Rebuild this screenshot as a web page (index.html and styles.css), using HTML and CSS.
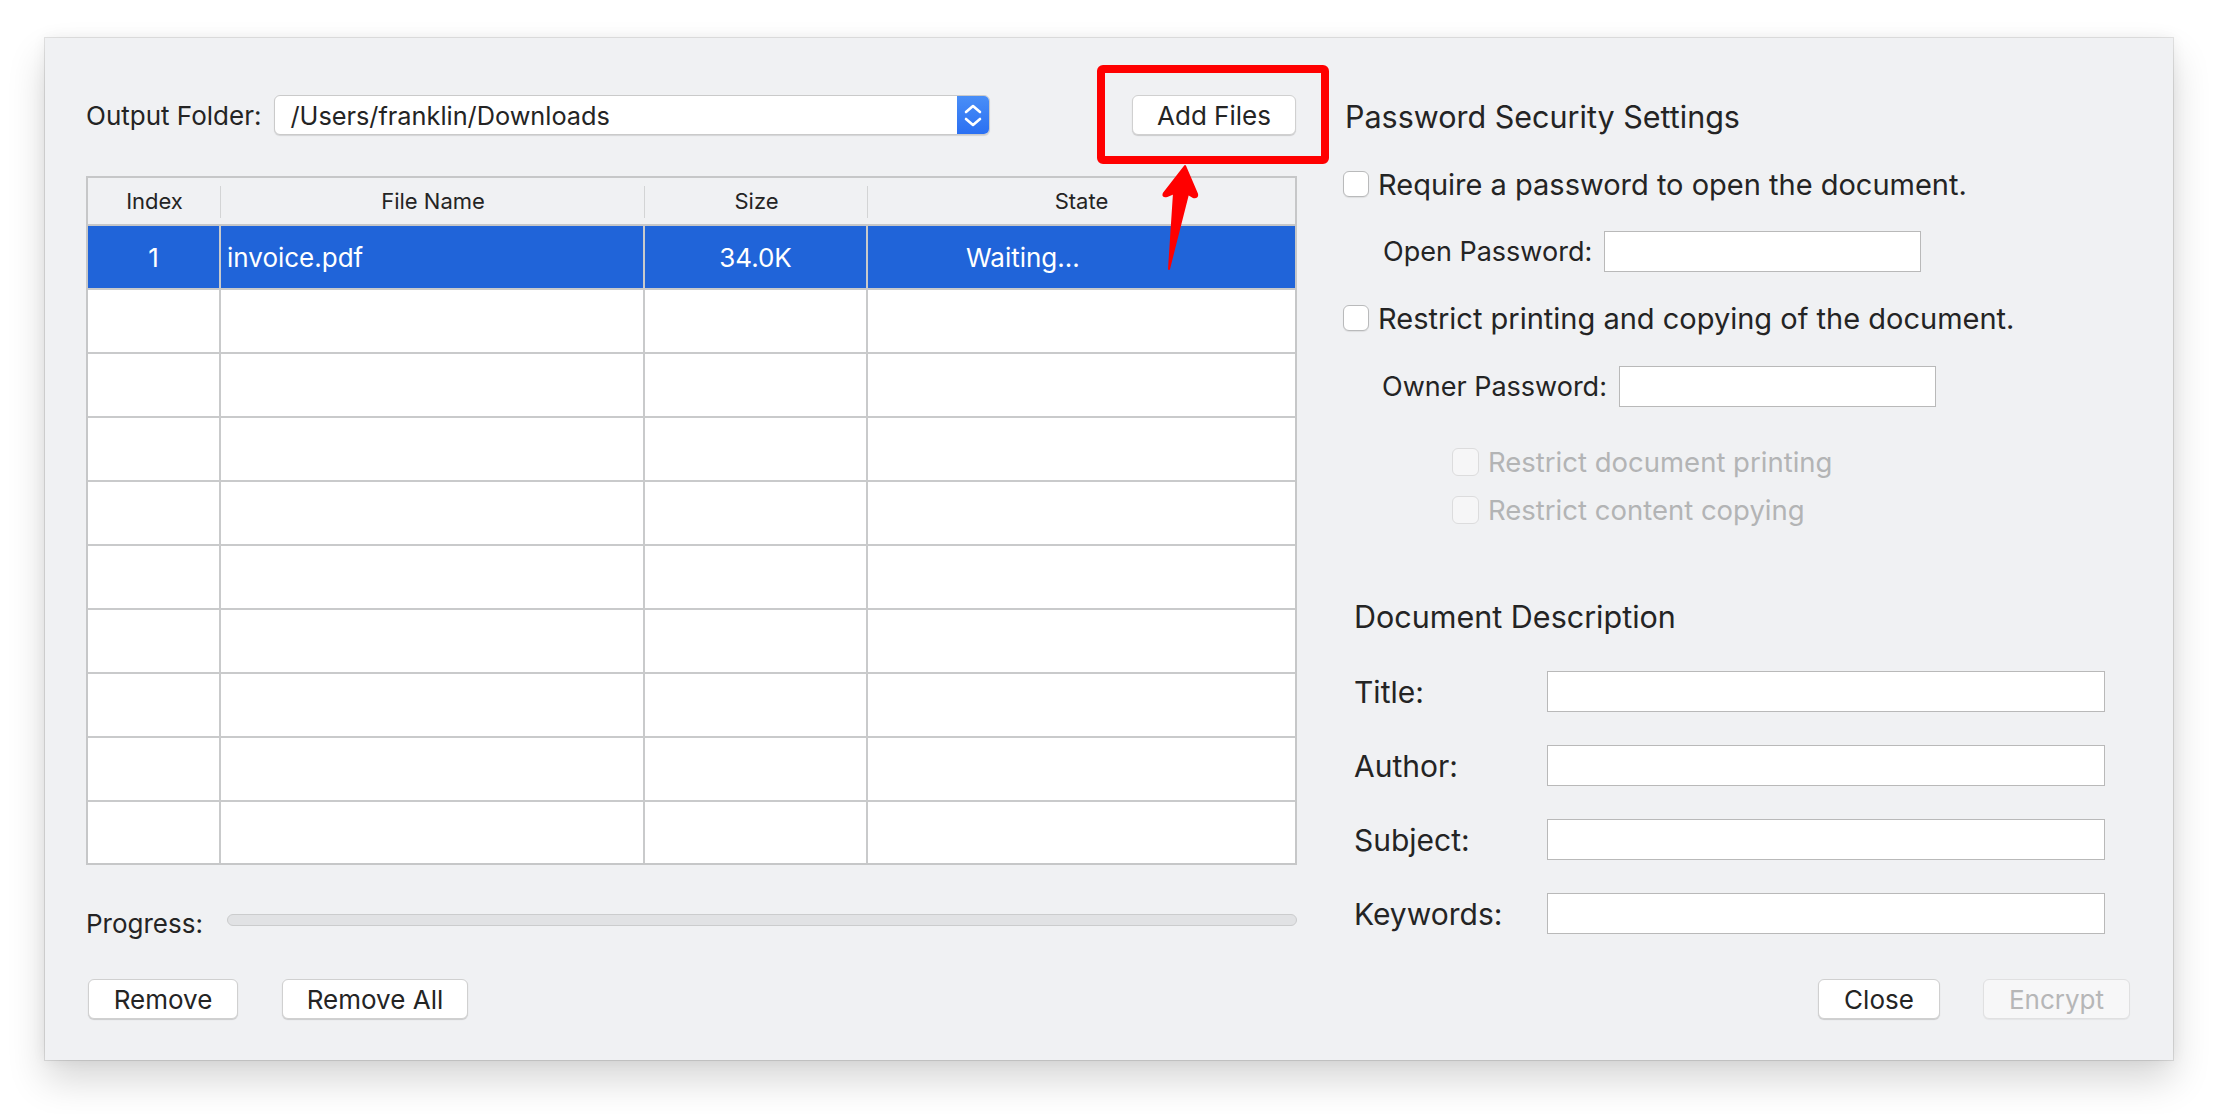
FILE: index.html
```html
<!DOCTYPE html>
<html lang="en">
<head>
  <meta charset="UTF-8" />
  <title>PDF Encrypt</title>
  <link rel="stylesheet" href="styles.css">
</head>
<body>
  <div class="window">
    <div class="left-pane">
      <div class="folder-row">
        <span class="label">Output Folder:</span>
        <div class="popup">
          <span class="popup-text">/Users/franklin/Downloads</span>
          <span class="stepper">
            <svg width="32" height="40" viewBox="0 0 32 40">
              <path d="M9 17 L16 11 L23 17" fill="none" stroke="#fff" stroke-width="2.6" stroke-linecap="round" stroke-linejoin="round"/>
              <path d="M9 24 L16 30 L23 24" fill="none" stroke="#fff" stroke-width="2.6" stroke-linecap="round" stroke-linejoin="round"/>
            </svg>
          </span>
        </div>
        <button class="btn add-btn">Add Files</button>
      </div>

      <table class="files">
        <colgroup>
          <col class="col-index">
          <col class="col-name">
          <col class="col-size">
          <col class="col-state">
        </colgroup>
        <thead>
          <tr><th>Index</th><th>File Name</th><th>Size</th><th class="last">State</th></tr>
        </thead>
        <tbody>
          <tr class="selected"><td class="center">1</td><td class="name">invoice.pdf</td><td class="center">34.0K</td><td class="state">Waiting...</td></tr>
          <tr><td></td><td></td><td></td><td></td></tr>
          <tr><td></td><td></td><td></td><td></td></tr>
          <tr><td></td><td></td><td></td><td></td></tr>
          <tr><td></td><td></td><td></td><td></td></tr>
          <tr><td></td><td></td><td></td><td></td></tr>
          <tr><td></td><td></td><td></td><td></td></tr>
          <tr><td></td><td></td><td></td><td></td></tr>
          <tr><td></td><td></td><td></td><td></td></tr>
          <tr class="last-row"><td></td><td></td><td></td><td></td></tr>
        </tbody>
      </table>

      <div class="progress-row">
        <span class="label">Progress:</span>
        <div class="progress-bar"></div>
      </div>

      <div class="button-row">
        <button class="btn remove-btn">Remove</button>
        <button class="btn remove-all-btn">Remove All</button>
      </div>
    </div>

    <div class="right-pane">
      <h2 class="section-title">Password Security Settings</h2>

      <label class="check-row first-check">
        <span class="checkbox"></span>
        <span>Require a password to open the document.</span>
      </label>
      <div class="pw-row open-pw">
        <span>Open Password:</span>
        <span class="text-field pw-field"></span>
      </div>

      <label class="check-row second-check">
        <span class="checkbox"></span>
        <span>Restrict printing and copying of the document.</span>
      </label>
      <div class="pw-row owner-pw">
        <span>Owner Password:</span>
        <span class="text-field pw-field"></span>
      </div>

      <label class="check-row sub-check print-check disabled">
        <span class="checkbox"></span>
        <span>Restrict document printing</span>
      </label>
      <label class="check-row sub-check copy-check disabled">
        <span class="checkbox"></span>
        <span>Restrict content copying</span>
      </label>

      <h2 class="section-title desc-title">Document Description</h2>

      <div class="desc-grid">
        <span class="desc-label">Title:</span><span class="text-field"></span>
        <span class="desc-label">Author:</span><span class="text-field"></span>
        <span class="desc-label">Subject:</span><span class="text-field"></span>
        <span class="desc-label">Keywords:</span><span class="text-field"></span>
      </div>

      <div class="button-row right-buttons">
        <button class="btn close-btn">Close</button>
        <button class="btn encrypt-btn" disabled>Encrypt</button>
      </div>
    </div>

    <!-- red highlight drawn over the window -->
    <svg class="annotation" width="2128" height="1022" viewBox="0 0 2128 1022">
      <rect x="1056" y="31" width="224" height="91" rx="2" fill="none" stroke="#ff0000" stroke-width="8"/>
      <path d="M1140 128 L1152 156 Q1153 160 1148 159 L1143 156 L1124 231 L1129 155 L1122 158 Q1117 159 1119 155 Z" fill="#ff0000" stroke="#ff0000" stroke-width="2" stroke-linejoin="round"/>
    </svg>
  </div>
</body>
</html>
```

FILE: styles.css
```css
html {
  background: #ffffff;
}

body {
  margin: 0;
  padding: 38px 0 54px 45px;
  background: #ffffff;
  font-family: Inter, "Noto Sans", sans-serif;
  color: #242424;
}

.window {
  position: relative;
  box-sizing: border-box;
  display: flex;
  gap: 45px;
  width: 2128px;
  height: 1022px;
  padding: 57px 43px 41px 41px;
  background: #f0f1f3;
  box-shadow: 0 0 0 1px rgba(0, 0, 0, 0.1), 0 20px 36px rgba(0, 0, 0, 0.16), 0 0 14px rgba(0, 0, 0, 0.06);
}

.left-pane {
  display: flex;
  flex-direction: column;
  width: 1211px;
}

.right-pane {
  display: flex;
  flex-direction: column;
  flex: 1;
}

.label {
  font-size: 26px;
}

/* folder row */
.folder-row {
  display: flex;
  align-items: center;
  height: 40px;
}

.popup {
  display: flex;
  align-items: center;
  box-sizing: border-box;
  width: 716px;
  height: 40px;
  margin-left: 13px;
  background: #fff;
  border: 1px solid #cacaca;
  border-radius: 6px;
  box-shadow: 0 1px 1px rgba(0, 0, 0, 0.12);
  overflow: hidden;
}

.popup-text {
  flex: 1;
  padding-left: 15px;
  font-size: 25.3px;
}

.stepper {
  display: flex;
  width: 32px;
  height: 40px;
  background: linear-gradient(#4a8ff7, #2a6ff2);
}

.btn {
  box-sizing: border-box;
  height: 40px;
  padding: 0;
  font-family: inherit;
  font-size: 26px;
  color: #242424;
  background: #fff;
  border: 1px solid #d0d0d0;
  border-radius: 6px;
  box-shadow: 0 1px 1px rgba(0, 0, 0, 0.16);
}

.add-btn {
  width: 164px;
  margin-left: auto;
  margin-right: 1px;
}

/* file table */
.files {
  margin-top: 41px;
  width: 1211px;
  table-layout: fixed;
  border-collapse: separate;
  border-spacing: 0;
  border: 2px solid #c6c7c8;
  background: #fff;
}

.col-index { width: 133px; }
.col-name { width: 424px; }
.col-size { width: 223px; }
.col-state { width: 427px; }

.files th {
  position: relative;
  height: 46px;
  padding: 0;
  font-size: 22px;
  font-weight: 400;
  background: #f0f1f3;
  border-bottom: 2px solid #c6c7c8;
}

.files th::after {
  content: "";
  position: absolute;
  right: -1px;
  top: 8px;
  bottom: 6px;
  width: 2px;
  background: #d3d4d5;
}

.files th.last::after {
  display: none;
}

.files td {
  height: 62px;
  padding: 0;
  font-size: 26px;
  border-bottom: 2px solid #c9cacb;
  border-right: 2px solid #c9cacb;
}

.files td:last-child {
  border-right: none;
}

.files .last-row td {
  height: 61px;
  border-bottom: none;
}

.files .selected td {
  background: #2064d9;
  color: #fff;
}

.files .center {
  text-align: center;
}

.files .name {
  padding-left: 6px;
}

.files .state {
  padding-left: 98px;
}

/* progress */
.progress-row {
  display: flex;
  align-items: center;
  height: 26px;
  margin-top: 45px;
}

.progress-bar {
  box-sizing: border-box;
  width: 1073px;
  height: 12px;
  margin-left: 24px;
  margin-top: -6px;
  background: #e1e2e4;
  border: 1px solid #cbcccd;
  border-radius: 6px;
}

.button-row {
  display: flex;
  margin-top: auto;
}

.remove-btn {
  width: 150px;
  margin-left: 2px;
}

.remove-all-btn {
  width: 186px;
  margin-left: 44px;
}

/* right pane */
.section-title {
  margin: 2px 0 0 3px;
  height: 40px;
  line-height: 40px;
  font-size: 30.5px;
  font-weight: 400;
}

.check-row {
  display: flex;
  align-items: center;
  gap: 9px;
  height: 26px;
  font-size: 29px;
}

.checkbox {
  box-sizing: border-box;
  width: 26px;
  height: 26px;
  background: #fff;
  border: 1px solid #b9babb;
  border-radius: 6px;
  box-shadow: 0 1px 1px rgba(0, 0, 0, 0.08);
}

.first-check { margin-top: 34px; margin-left: 1px; }
.second-check { margin-top: 33px; margin-left: 1px; }

.sub-check {
  padding-left: 110px;
  height: 28px;
  font-size: 27.5px;
}

.sub-check .checkbox {
  width: 27px;
  height: 28px;
}

.print-check { margin-top: 42px; }
.copy-check { margin-top: 20px; }

.disabled {
  color: #b3b4b5;
}

.disabled .checkbox {
  background: #f6f6f7;
  border-color: #dcdcdd;
  box-shadow: none;
}

.pw-row {
  display: flex;
  align-items: center;
  height: 41px;
  padding-left: 41px;
  font-size: 27px;
}

.open-pw { margin-top: 34px; }
.owner-pw { margin-top: 35px; height: 40px; padding-left: 40px; }

.pw-field {
  width: 317px;
  height: 100%;
  margin-left: 12px;
  border-color: #d3d3d3;
}

.text-field {
  box-sizing: border-box;
  display: block;
  height: 41px;
  background: #fff;
  border: 1px solid #b9b9b9;
}

.desc-title {
  margin: 73px 0 0 12px;
}

.desc-grid {
  display: grid;
  grid-template-columns: 193px 558px;
  row-gap: 33px;
  align-items: center;
  margin: 34px 0 0 12px;
}

.desc-label {
  font-size: 30px;
}

.right-buttons {
  justify-content: flex-end;
}

.close-btn {
  width: 122px;
}

.encrypt-btn {
  width: 147px;
  margin-left: 43px;
  color: #b6b6b7;
  background: #f7f7f8;
  border-color: #e0e0e1;
  box-shadow: 0 1px 1px rgba(0, 0, 0, 0.05);
}

.annotation {
  position: absolute;
  left: 0;
  top: 0;
  pointer-events: none;
}
```
